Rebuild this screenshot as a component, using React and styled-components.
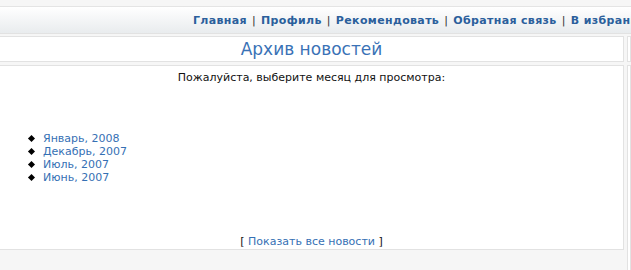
import React from 'react';
import styled, { createGlobalStyle } from 'styled-components';

const GlobalStyle = createGlobalStyle`
  html, body {
    margin: 0;
    padding: 0;
    background: #f6f6f6;
    font-family: "DejaVu Sans", Verdana, sans-serif;
    font-size: 11px;
    overflow: hidden;
  }
`;

const Page = styled.div`
  width: 631px;
  height: 270px;
  overflow: hidden;
  padding-top: 6px;
  box-sizing: border-box;
`;

const TopNav = styled.div`
  height: 26px;
  border-top: 1px solid #e4e4e4;
  border-bottom: 1px solid #e2e2e2;
  background: linear-gradient(#ffffff 0%, #f6f7f8 40%, #e9ecee 100%);
  display: flex;
  align-items: center;
  padding-left: 193px;
  white-space: nowrap;
  overflow: hidden;
  font-weight: bold;
  font-size: 11px;
  letter-spacing: 0.35px;
  color: #222;
`;

const NavLink = styled.a`
  color: #2b5f9c;
  text-decoration: none;
`;

const Sep = styled.span`
  color: #333;
  font-weight: normal;
  padding: 0 5px;
`;

const Columns = styled.div`
  display: grid;
  grid-template-columns: 624px 1fr;
  column-gap: 3px;
  margin-top: 2px;
`;

const Column = styled.div`
  display: flex;
  flex-direction: column;
  gap: 3px;
`;

const Box = styled.div`
  background: #fff;
  border: 1px solid #e2e2e2;
  border-left: ${p => (p.$open ? 'none' : '1px solid #e2e2e2')};
  box-sizing: border-box;
  height: ${p => p.$h}px;
`;

const TitleBox = styled(Box)`
  display: flex;
  align-items: center;
  justify-content: center;
`;

const Title = styled.h1`
  margin: 0;
  font-weight: normal;
  font-size: 17px;
  color: #3a72b6;
`;

const Body = styled(Box)`
  padding-top: 5px;
  display: flex;
  flex-direction: column;
`;

const Prompt = styled.div`
  text-align: center;
  color: #111;
  line-height: 13px;
`;

const MonthList = styled.ul`
  list-style: none;
  margin: 48px 0 0 0;
  padding-left: 28px;
`;

const MonthItem = styled.li`
  line-height: 13px;
  display: flex;
  align-items: center;
  &::before {
    content: '';
    width: 5px;
    height: 5px;
    background: #000;
    transform: rotate(45deg);
    margin-right: 9px;
    margin-left: 1px;
  }
`;

const Link = styled.a`
  color: #3570b4;
  text-decoration: none;
`;

const ShowAll = styled.div`
  margin-top: 51px;
  text-align: center;
  color: #111;
  line-height: 13px;
`;

const months = ['Январь, 2008', 'Декабрь, 2007', 'Июль, 2007', 'Июнь, 2007'];
const nav = ['Главная', 'Профиль', 'Рекомендовать', 'Обратная связь', 'В избранное'];

export default function App() {
  return (
    <Page>
      <GlobalStyle />
      <TopNav>
        {nav.map((item, i) => (
          <React.Fragment key={item}>
            {i > 0 && <Sep>|</Sep>}
            <NavLink href="#">{item}</NavLink>
          </React.Fragment>
        ))}
      </TopNav>
      <Columns>
        <Column>
          <TitleBox $open $h={26}>
            <Title>Архив новостей</Title>
          </TitleBox>
          <Body $open $h={185}>
            <Prompt>Пожалуйста, выберите месяц для просмотра:</Prompt>
            <MonthList>
              {months.map(m => (
                <MonthItem key={m}>
                  <Link href="#">{m}</Link>
                </MonthItem>
              ))}
            </MonthList>
            <ShowAll>
              [ <Link href="#">Показать все новости</Link> ]
            </ShowAll>
          </Body>
        </Column>
        <Column>
          <Box $h={26} />
          <Box $h={220} />
        </Column>
      </Columns>
    </Page>
  );
}
